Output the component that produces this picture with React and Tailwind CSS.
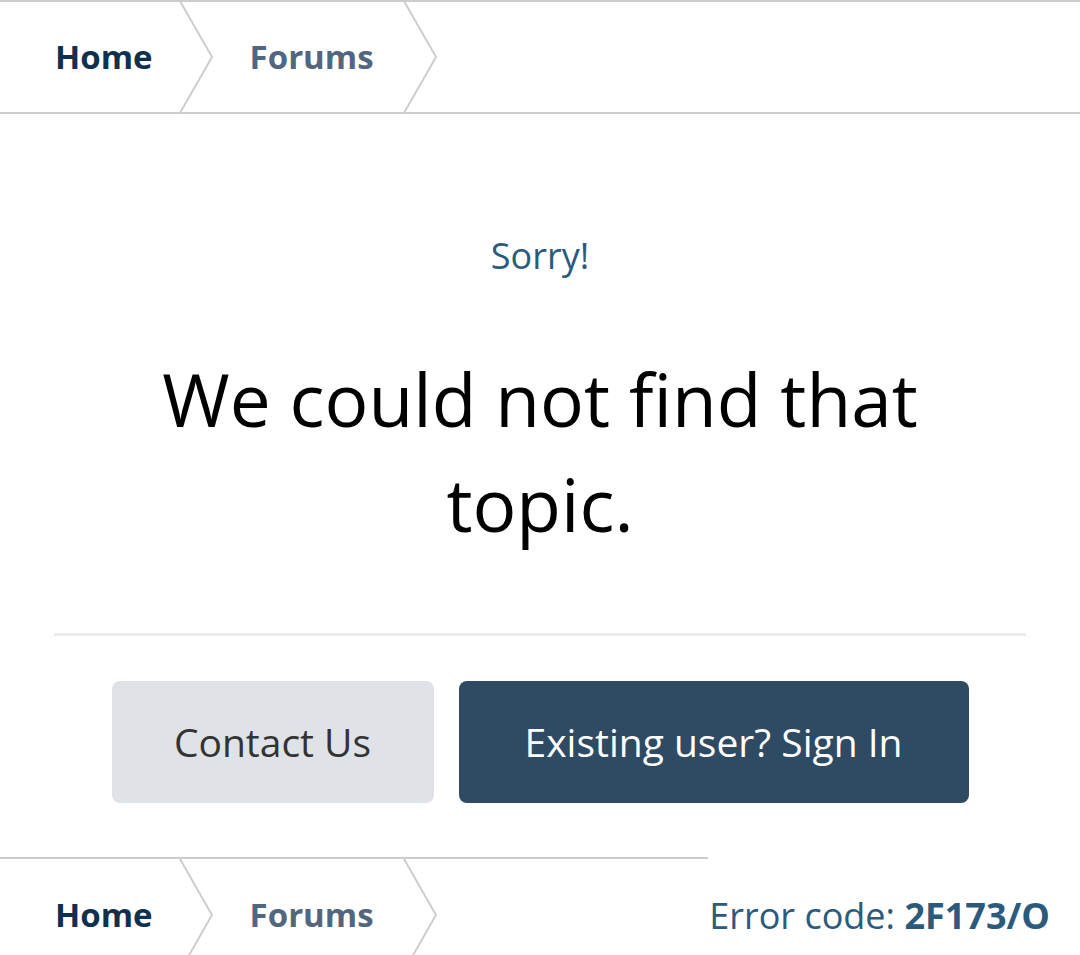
import React from "react"

function Chevron() {
  return (
    <svg width="34" height="112" viewBox="0 0 34 112" className="shrink-0">
      <polyline points="1,0 33,56 1,112" fill="none" stroke="#cdcdcd" strokeWidth="2" />
    </svg>
  )
}

function Crumbs() {
  return (
    <div className="flex items-center h-[112px]">
      <a className="pl-[55px] pr-[26px] font-bold text-[33px] text-[#10304f]">Home</a>
      <Chevron />
      <a className="pl-[37px] pr-[29px] font-bold text-[33px] text-[#52677f]">Forums</a>
      <Chevron />
    </div>
  )
}

export default function App() {
  return (
    <div className="w-[1080px] h-[955px] overflow-hidden bg-white font-['Open_Sans',sans-serif]">
      {/* top breadcrumb */}
      <div className="border-y-2 border-[#cccccc] h-[114px] flex items-center">
        <Crumbs />
      </div>

      {/* error message */}
      <div className="px-[54px] text-center">
        <p className="mt-[120px] text-[36px] leading-[44px] text-[#2b5a7d]">Sorry!</p>
        <h1 className="mt-[68px] px-[60px] text-[73px] leading-[105px] text-black">
          We could not find that topic.
        </h1>
        <div className="mt-[77px] h-[3px] bg-[#ebebeb]" />
        <div className="mt-[45px] flex justify-center gap-[25px]">
          <button className="w-[322px] h-[122px] rounded-[8px] bg-[#dfe2e6] text-[39px] text-[#333333]">
            Contact Us
          </button>
          <button className="w-[510px] h-[122px] rounded-[8px] bg-[#2f4a63] text-[39px] text-white">
            Existing user? Sign In
          </button>
        </div>
      </div>

      {/* bottom breadcrumb */}
      <div className="mt-[54px] flex items-start justify-between">
        <div className="w-[708px] shrink-0 border-t-2 border-[#cccccc]">
          <Crumbs />
        </div>
        <p className="pr-[30px] pt-[32px] whitespace-nowrap text-[36px] text-[#2b5a7d]">
          Error code: <span className="font-bold">2F173/O</span>
        </p>
      </div>
    </div>
  )
}
